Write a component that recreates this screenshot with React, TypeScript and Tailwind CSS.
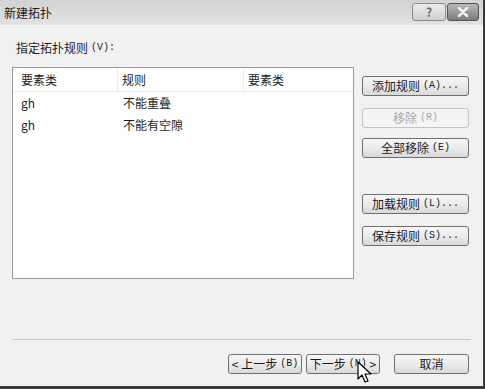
import React from "react";

const font = { fontFamily: '"Noto Sans CJK SC", "Noto Sans", sans-serif' };

function M({ children }: { children: React.ReactNode }) {
  return (
    <span className="ml-[3px] text-[10px] leading-none" style={{ fontFamily: '"Liberation Mono", monospace' }}>
      {children}
    </span>
  );
}

function Btn({ children, disabled, className = "" }: { children: React.ReactNode; disabled?: boolean; className?: string }) {
  return (
    <div
      className={
        "flex items-center justify-center h-[20px] rounded-[3px] border text-[12px] leading-none whitespace-nowrap " +
        (disabled
          ? "border-[#c4c4c4] bg-[#f4f4f4] text-[#a8a8a8] "
          : "border-[#6f6f6f] bg-gradient-to-b from-[#f6f6f6] via-[#ebebeb] to-[#d9d9d9] text-[#1a1a1a] ") +
        className
      }
    >
      {children}
    </div>
  );
}

export default function App() {
  return (
    <div style={font} className="relative w-[485px] h-[389px] bg-[#f1f1f1] overflow-hidden border-r-[2px] border-b-[3px] border-[#3a3a3a] text-[#1e1e1e]">
      {/* title bar */}
      <div className="h-[25px] flex items-center justify-between bg-gradient-to-b from-[#d3d3d3] to-[#e2e2e2] pl-[4px] pr-[4px]">
        <span className="text-[12px] text-[#202020]">新建拓扑</span>
        <div className="flex gap-[1px] mt-[-2px]">
          <div className="w-[34px] h-[18px] rounded-[3px] border border-[#8a8a8a] bg-gradient-to-b from-[#ececec] to-[#cfcfcf] flex items-center justify-center text-[12px] text-[#6a6a6a] font-bold">?</div>
          <div className="w-[32px] h-[18px] rounded-[3px] border border-[#555] bg-gradient-to-b from-[#b8b8b8] to-[#7c7c7c] flex items-center justify-center">
            <svg width="12" height="10" viewBox="0 0 12 10">
              <path d="M2 1 L10 9 M10 1 L2 9" stroke="#f4f4f4" strokeWidth="2.6" strokeLinecap="round" />
            </svg>
          </div>
        </div>
      </div>

      <div className="px-[12px]">
        <div className="mt-[16px] h-[14px] flex items-center text-[12px] leading-none pl-[4px]">指定拓扑规则<M>(V):</M></div>
        <div className="flex mt-[12px]">
          {/* list */}
          <div className="w-[342px] h-[212px] border border-[#9a9a9a] bg-white">
            <div className="flex h-[24px] items-center border-b border-[#ececec] text-[12px]">
              <div className="w-[105px] pl-[8px] border-r border-[#ececec] h-full flex items-center">要素类</div>
              <div className="w-[126px] pl-[4px] border-r border-[#ececec] h-full flex items-center">规则</div>
              <div className="pl-[4px]">要素类</div>
            </div>
            {[["gh", "不能重叠"], ["gh", "不能有空隙"]].map(([a, b], i) => (
              <div key={i} className="flex h-[22px] items-center text-[12px]">
                <div className="w-[105px] pl-[8px]">{a}</div>
                <div className="pl-[5px]">{b}</div>
              </div>
            ))}
          </div>
          {/* buttons */}
          <div className="ml-[8px] w-[107px] flex flex-col">
            <Btn className="mt-[9px]">添加规则<M>(A)...</M></Btn>
            <Btn disabled className="mt-[12px]">移除<M>(R)</M></Btn>
            <Btn className="mt-[10px]">全部移除<M>(E)</M></Btn>
            <Btn className="mt-[36px]">加载规则<M>(L)...</M></Btn>
            <Btn className="mt-[12px]">保存规则<M>(S)...</M></Btn>
          </div>
        </div>
        <div className="mt-[60px] h-[1px] w-[459px] bg-[#c8c8c8]" />
        <div className="flex mt-[14px] pl-[216px]">
          <Btn className="w-[74px]">&lt; 上一步<M>(B)</M></Btn>
          <Btn className="w-[74px] ml-[4px]">下一步<M>(N)</M>&nbsp;&gt;</Btn>
          <Btn className="w-[75px] ml-[14px]">取消</Btn>
        </div>
      </div>

      {/* cursor */}
      <svg className="absolute left-[357px] top-[361px]" width="16" height="24" viewBox="0 0 16 24">
        <path d="M1 1 L1 18 L5 14 L8 21 L11 20 L8 13 L14 13 Z" fill="white" stroke="black" strokeWidth="1.2" strokeLinejoin="round" />
      </svg>
    </div>
  );
}
